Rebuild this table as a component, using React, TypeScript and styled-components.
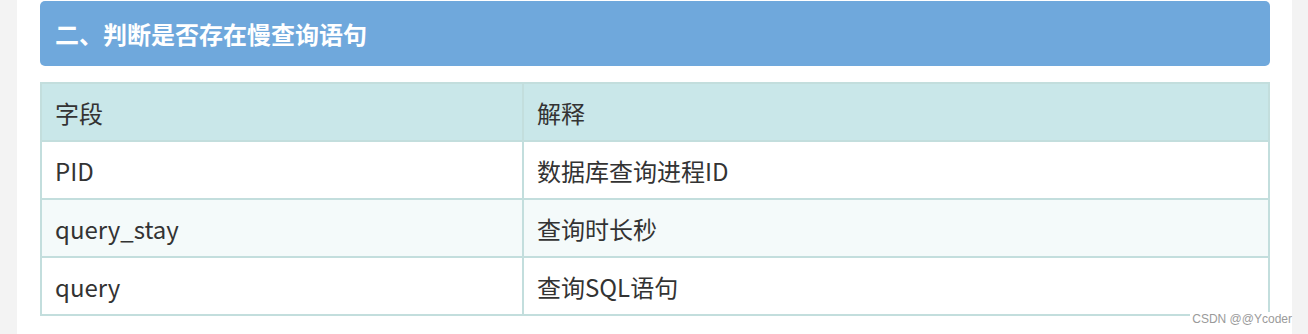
import React from "react";
import styled, { createGlobalStyle } from "styled-components";

const GlobalStyle = createGlobalStyle`
  html, body {
    margin: 0;
    padding: 0;
    background: #f3f3f3;
  }
`;

const Page = styled.div`
  display: flex;
  justify-content: flex-start;
  width: 1308px;
  height: 334px;
  overflow: hidden;
  font-family: "Noto Sans CJK SC", "Noto Sans", sans-serif;
`;

const Article = styled.div`
  position: relative;
  width: 1275px;
  margin-left: 17px;
  padding: 1px 22px 0 23px;
  box-sizing: border-box;
  background: #ffffff;
`;

const Heading = styled.h2`
  margin: 0;
  height: 65px;
  display: flex;
  align-items: center;
  padding-left: 15px;
  border-radius: 5px;
  background: #6fa8dc;
  color: #ffffff;
  font-size: 24px;
  font-weight: 700;
`;

const Table = styled.table`
  width: 1230px;
  margin-top: 16px;
  border-spacing: 0;
  border: 1px solid #c3dedd;
  font-size: 24px;
  color: #333333;
`;

const HeadCell = styled.th<{ $w?: string }>`
  height: 58px;
  padding: 0 0 0 13px;
  text-align: left;
  font-weight: 400;
  background: #c9e7e9;
  border: 1px solid #c3dedd;
  width: ${(p) => p.$w ?? "auto"};
  box-sizing: border-box;
`;

const Row = styled.tr<{ $alt?: boolean }>`
  background: ${(p) => (p.$alt ? "#f4fafa" : "#ffffff")};
`;

const Cell = styled.td`
  height: 58px;
  padding: 0 0 0 13px;
  border: 1px solid #c3dedd;
  box-sizing: border-box;
`;

const Watermark = styled.span`
  position: absolute;
  right: 0;
  bottom: 7px;
  padding: 0 0 0 2px;
  background: #ffffff;
  color: #9a9a9a;
  font-family: "Liberation Sans", Arial, sans-serif;
  font-size: 12px;
  line-height: 15px;
`;

const rows = [
  { field: "PID", desc: "数据库查询进程ID" },
  { field: "query_stay", desc: "查询时长秒" },
  { field: "query", desc: "查询SQL语句" },
];

export default function App() {
  return (
    <>
      <GlobalStyle />
      <Page>
        <Article>
          <Heading>二、判断是否存在慢查询语句</Heading>
          <Table>
            <thead>
              <tr>
                <HeadCell $w="482px">字段</HeadCell>
                <HeadCell>解释</HeadCell>
              </tr>
            </thead>
            <tbody>
              {rows.map((r, i) => (
                <Row key={r.field} $alt={i % 2 === 1}>
                  <Cell>{r.field}</Cell>
                  <Cell>{r.desc}</Cell>
                </Row>
              ))}
            </tbody>
          </Table>
          <Watermark>CSDN @@Ycoder</Watermark>
        </Article>
      </Page>
    </>
  );
}
